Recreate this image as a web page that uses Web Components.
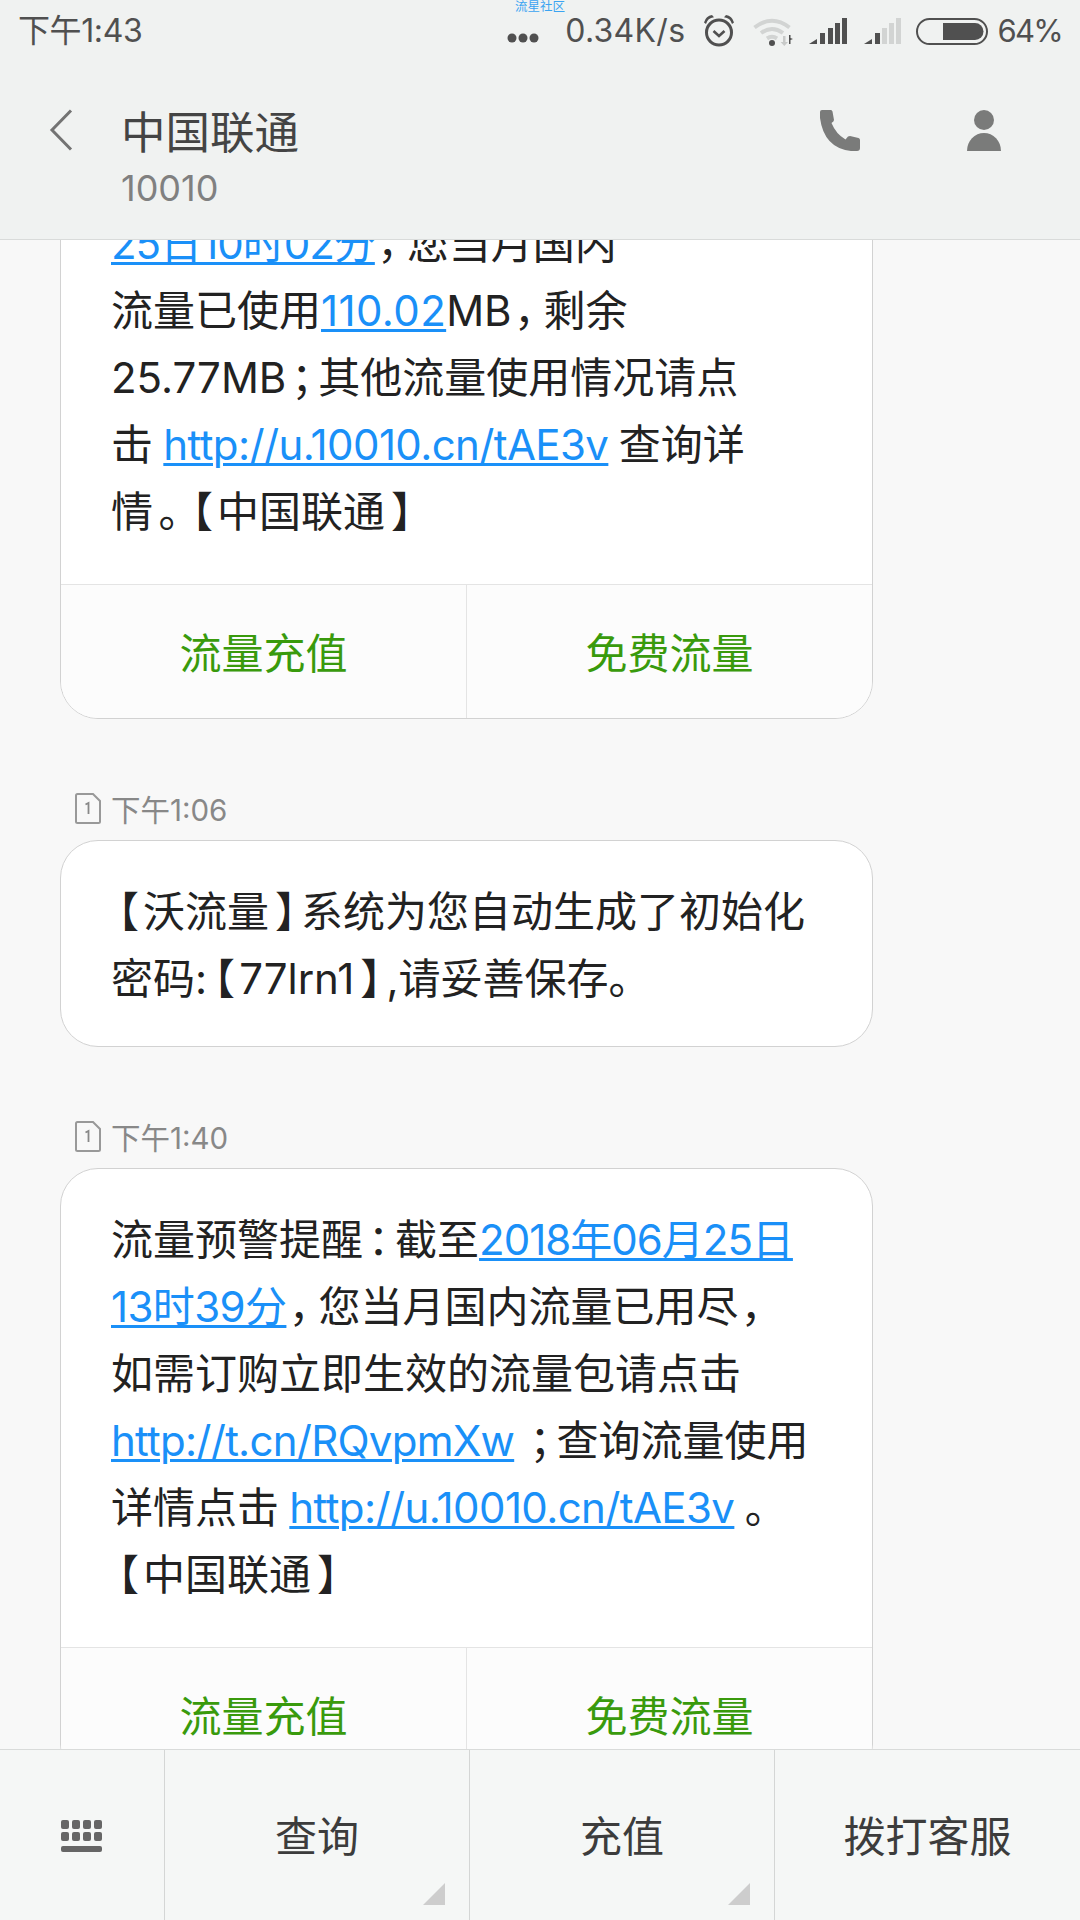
<!DOCTYPE html>
<html lang="zh-CN">
<head>
<meta charset="utf-8">
<style>
  html, body { margin: 0; padding: 0; background: #f8f8f8; }
  body { font-family: Inter, "Noto Sans CJK SC", sans-serif; }
</style>
</head>
<body>
<sms-screen>
  <status-bar slot="top"></status-bar>
  <title-bar slot="top" name="中国联通" number="10010"></title-bar>

  <sms-card style="margin-top:-68px" actions>
    <a class="date">25日10时02分</a><span class="pn">，</span>您当月国内<br>
    流量已使用<a class="num">110.02</a>MB<span class="pn">，</span>剩余<br>
    25.77MB<span class="pn">；</span>其他流量使用情况请点<br>
    击 <a class="url">http://u.10010.cn/tAE3v</a> 查询详<br>
    情<span class="dot">。</span><span class="lb">【</span>中国联通<span class="rb">】</span>
  </sms-card>

  <sms-stamp>下午1:06</sms-stamp>
  <sms-card>
    <span class="lb">【</span>沃流量<span class="rb">】</span>系统为您自动生成了初始化<br>
    密码:<span class="lb">【</span>77lrn1<span class="rb">】</span>,请妥善保存。
  </sms-card>

  <sms-stamp>下午1:40</sms-stamp>
  <sms-card actions>
    流量预警提醒<span class="pn">：</span>截至<a class="date">2018年06月25日</a><br>
    <a class="url">13时39分</a><span class="pn">，</span>您当月国内流量已用尽<span class="pn">，</span><br>
    如需订购立即生效的流量包请点击<br>
    <a class="short">http://t.cn/RQvpmXw</a> <span class="pn">；</span>查询流量使用<br>
    详情点击 <a class="url">http://u.10010.cn/tAE3v</a> 。<br>
    <span class="lb">【</span>中国联通<span class="rb">】</span>
  </sms-card>

  <menu-bar slot="bottom"></menu-bar>
</sms-screen>

<script>
const screenTpl = document.createElement('template');
screenTpl.innerHTML = `
<style>
  :host {
    display: flex;
    flex-direction: column;
    width: 1080px;
    height: 1920px;
    overflow: hidden;
    background: #f8f8f8;
  }
  .top { flex: none; border-bottom: 1px solid #d9dbda; background: #f0f2f1; }
  .list { flex: 1; min-height: 0; overflow: hidden; padding: 0 207px 0 60px; }
  .bottom { flex: none; }
</style>
<div class="top"><slot name="top"></slot></div>
<div class="list"><slot></slot></div>
<div class="bottom"><slot name="bottom"></slot></div>
`;
class SmsScreen extends HTMLElement {
  constructor() {
    super();
    this.attachShadow({mode: 'open'});
    this.shadowRoot.appendChild(screenTpl.content.cloneNode(true));
  }
}

const statusTpl = document.createElement('template');
statusTpl.innerHTML = `
<style>
  :host {
    display: block;
    position: relative;
    height: 62px;
    color: #505050;
    font-size: 32px;
    line-height: 62px;
  }
  .row { display: flex; align-items: center; height: 62px; padding: 0 18px 0 18px; }
  .clock { flex: 1; letter-spacing: -.4px; }
  svg { display: block; flex: none; }
  .speed { margin: 0 18px 0 26px; letter-spacing: .3px; }
  .pct { margin-left: 9px; font-size: 31px; letter-spacing: -1.7px; }
  .tag {
    position: absolute;
    top: 0;
    left: 515px;
    font-size: 12.5px;
    line-height: 13px;
    color: #3aa4f2;
  }
</style>
<div class="tag">流星社区</div>
<div class="row">
  <span class="clock">下午1:43</span>
  <svg width="32" height="10" viewBox="0 0 32 10" style="margin-top:13px"><g fill="#505050"><circle cx="5" cy="5" r="4.5"/><circle cx="16" cy="5" r="4.5"/><circle cx="27" cy="5" r="4.5"/></g></svg>
  <span class="speed">0.34K/s</span>
  <svg width="32" height="33" viewBox="0 0 32 33" style="margin-right:18px;margin-top:-1px"><g fill="none" stroke="#505050"><circle cx="16" cy="18.500" r="12.500" stroke-width="3"/><path d="M10.500 17l5.500 5 5.500-5" stroke-width="2.600"/></g><path d="M1 8.500Q3 1.500 9 1l2 2.200Q4.500 4 3 10zM31 8.500Q29 1.500 23 1l-2 2.200Q27.500 4 29 10z" fill="#505050"/></svg>
  <svg width="40" height="29" viewBox="0 0 40 29" style="margin-right:16px"><g fill="none" stroke="#d2d4d3" stroke-width="4"><path d="M1.500 10.500Q19-3 36.500 10.500"/><path d="M8 16Q19 8 30 16"/><path d="M14 21.500Q19 18 24 21.500"/></g><circle cx="19" cy="26" r="3" fill="#505050"/><path d="M30 19h2.500v6h2.500l-3.700 4-3.700-4h2.400z" fill="#c8cac9"/><path d="M36 18v9h1.500v-4l2.500-1-2.500-1v-3z" fill="#505050"/></svg>
  <svg width="38" height="26" viewBox="0 0 38 26" style="margin-right:17px"><g fill="#505050"><path d="M0 26l8-5v5z"/><rect x="11" y="15" width="5" height="11"/><rect x="19" y="10" width="5" height="16"/><rect x="26" y="5" width="5" height="21"/><rect x="33" y="0" width="5" height="26"/></g></svg>
  <svg width="38" height="26" viewBox="0 0 38 26" style="margin-right:14px"><path d="M0 26l8-5v5z" fill="#505050"/><rect x="11" y="15" width="5" height="11" fill="#505050"/><g fill="#d2d4d3"><rect x="18" y="10" width="5" height="16"/><rect x="25" y="5" width="5" height="21"/><rect x="32" y="0" width="5" height="26"/></g></svg>
  <svg width="72" height="27" viewBox="0 0 72 27"><rect x="1" y="1" width="70" height="25" rx="12.500" fill="none" stroke="#505050" stroke-width="2"/><path d="M27 5h32a8.500 8.500 0 0 1 0 17H27z" fill="#505050"/></svg>
  <span class="pct">64%</span>
</div>
`;
class StatusBar extends HTMLElement {
  constructor() {
    super();
    this.attachShadow({mode: 'open'});
    this.shadowRoot.appendChild(statusTpl.content.cloneNode(true));
  }
}

const titleTpl = document.createElement('template');
titleTpl.innerHTML = `
<style>
  :host {
    display: flex;
    align-items: flex-start;
    height: 177px;
    color: #444;
  }
  .back { margin: 47px 0 0 49px; flex: none; }
  .names { margin: 41px 0 0 48px; flex: 1; }
  .name { font-size: 44.5px; line-height: 60px; }
  .num { font-size: 36px; line-height: 50px; color: #808080; }
  .phone { margin: 48px 0 0 0; flex: none; }
  .person { margin: 48px 79px 0 107px; flex: none; }
</style>
<svg class="back" width="24" height="42" viewBox="0 0 24 42"><path d="M22 1.500L3 21l19 19.500" fill="none" stroke="#737373" stroke-width="3"/></svg>
<div class="names">
  <div class="name"></div>
  <div class="num"></div>
</div>
<svg class="phone" width="40" height="41" viewBox="0 0 40 41"><path d="M2 0H11Q12 0 12.500 1.500L14 10Q14 11.500 11.500 13Q16 24 25.500 29.500L28 26.500Q29 26 30 26L38.500 28Q40 28.500 40 30V38Q40 41 37 41H31Q4 38 0 8V2Q0 0 2 0z" fill="#7a7b7a"/></svg>
<svg class="person" width="34" height="41" viewBox="0 0 34 41"><circle cx="17" cy="10" r="10" fill="#7a7b7a"/><path d="M0 41A17 18 0 0 1 34 41z" fill="#7a7b7a"/></svg>
`;
class TitleBar extends HTMLElement {
  constructor() {
    super();
    this.attachShadow({mode: 'open'});
    this.shadowRoot.appendChild(titleTpl.content.cloneNode(true));
  }
  connectedCallback() {
    this.shadowRoot.querySelector('.name').textContent = this.getAttribute('name');
    this.shadowRoot.querySelector('.num').textContent = this.getAttribute('number');
  }
}

const stampTpl = document.createElement('template');
stampTpl.innerHTML = `
<style>
  :host {
    display: flex;
    align-items: center;
    height: 40px;
    margin: 69px 0 12px 15px;
    font-size: 29.5px;
    color: #888;
  }
  svg { flex: none; margin-right: 10px; }
</style>
<svg width="26" height="31" viewBox="0 0 26 31"><path d="M1 2.500Q1 1 2.500 1H18l7 7v20.500Q25 30 23.500 30h-21Q1 30 1 28.500z" fill="none" stroke="#999" stroke-width="2"/><path d="M10.500 11.500l3-1.500v11" fill="none" stroke="#888" stroke-width="1.800"/></svg>
<slot></slot>
`;
class SmsStamp extends HTMLElement {
  constructor() {
    super();
    this.attachShadow({mode: 'open'});
    this.shadowRoot.appendChild(stampTpl.content.cloneNode(true));
  }
}

const cardTpl = document.createElement('template');
cardTpl.innerHTML = `
<style>
  :host {
    display: block;
    box-sizing: border-box;
    width: 813px;
    background: #fff;
    border: 1px solid #d2d2d2;
    border-radius: 38px;
    overflow: hidden;
    color: #222;
  }
  .body {
    padding: 37px 40px 34px 50px;
    font-size: 42px;
    line-height: 67px;
    white-space: nowrap;
    word-spacing: -1.5px;
    text-spacing-trim: space-all;
  }
  :host([actions]) .body { padding-bottom: 39px; }
  ::slotted(a) {
    color: #1a90f8;
    text-decoration: underline;
    text-decoration-thickness: 3px;
    text-underline-offset: 3px;
  }
  ::slotted(a.url) { letter-spacing: -.6px; }
  ::slotted(a.short) { letter-spacing: -.75px; }
  ::slotted(a.date) { letter-spacing: -1px; }
  ::slotted(a.num) { letter-spacing: .4px; }
  /* fullwidth punctuation is narrower on the device than in the CJK font */
  ::slotted(.pn), ::slotted(.dot), ::slotted(.lb), ::slotted(.rb) { font-feature-settings: "palt"; }
  ::slotted(.pn) { padding: 0 6px 0 5px; }
  ::slotted(.dot) { padding: 0 6px 0 5px; }
  ::slotted(.lb) { padding: 0 5px 0 6px; }
  ::slotted(.rb) { padding: 0 4px 0 7px; }
  .actions {
    display: none;
    height: 133px;
    border-top: 1px solid #e4e4e4;
    background: #fcfcfc;
  }
  :host([actions]) .actions { display: flex; }
  .actions span {
    flex: 1;
    display: flex;
    align-items: center;
    justify-content: center;
    padding-bottom: 3px;
    color: #399a0c;
    font-size: 42px;
  }
  .actions span + span { border-left: 1px solid #e4e4e4; }
</style>
<div class="body"><slot></slot></div>
<div class="actions"><span>流量充值</span><span>免费流量</span></div>
`;
class SmsCard extends HTMLElement {
  constructor() {
    super();
    this.attachShadow({mode: 'open'});
    this.shadowRoot.appendChild(cardTpl.content.cloneNode(true));
  }
}

const menuTpl = document.createElement('template');
menuTpl.innerHTML = `
<style>
  :host {
    display: grid;
    grid-template-columns: 164px 305px 305px 306px;
    height: 171px;
    border-top: 1px solid #d9dbda;
    box-sizing: border-box;
    background: #f5f7f6;
    color: #3c3c3c;
    font-size: 42px;
  }
  .cell {
    position: relative;
    display: flex;
    align-items: center;
    justify-content: center;
    padding-bottom: 3px;
  }
  .cell svg { margin-top: 5px; }
  .cell + .cell { border-left: 1px solid #d4d6d5; }
  .more {
    position: absolute;
    right: 24px;
    bottom: 15px;
    width: 22px;
    height: 22px;
    background: #cdcdcd;
    clip-path: polygon(100% 0, 100% 100%, 0 100%);
  }
</style>
<div class="cell">
  <svg width="42" height="32" viewBox="0 0 42 32" fill="#666"><rect x="0" y="0" width="8" height="9" rx="2"/><rect x="11" y="0" width="8" height="9" rx="2"/><rect x="22" y="0" width="8" height="9" rx="2"/><rect x="33" y="0" width="8" height="9" rx="2"/><rect x="0" y="12" width="8" height="9" rx="2"/><rect x="11" y="12" width="8" height="9" rx="2"/><rect x="22" y="12" width="8" height="9" rx="2"/><rect x="33" y="12" width="8" height="9" rx="2"/><rect x="0" y="26" width="41" height="6" rx="2"/></svg>
</div>
<div class="cell">查询<i class="more"></i></div>
<div class="cell">充值<i class="more"></i></div>
<div class="cell">拨打客服</div>
`;
class MenuBar extends HTMLElement {
  constructor() {
    super();
    this.attachShadow({mode: 'open'});
    this.shadowRoot.appendChild(menuTpl.content.cloneNode(true));
  }
}

window.customElements.define('sms-screen', SmsScreen);
window.customElements.define('status-bar', StatusBar);
window.customElements.define('title-bar', TitleBar);
window.customElements.define('sms-stamp', SmsStamp);
window.customElements.define('sms-card', SmsCard);
window.customElements.define('menu-bar', MenuBar);
</script>
</body>
</html>
